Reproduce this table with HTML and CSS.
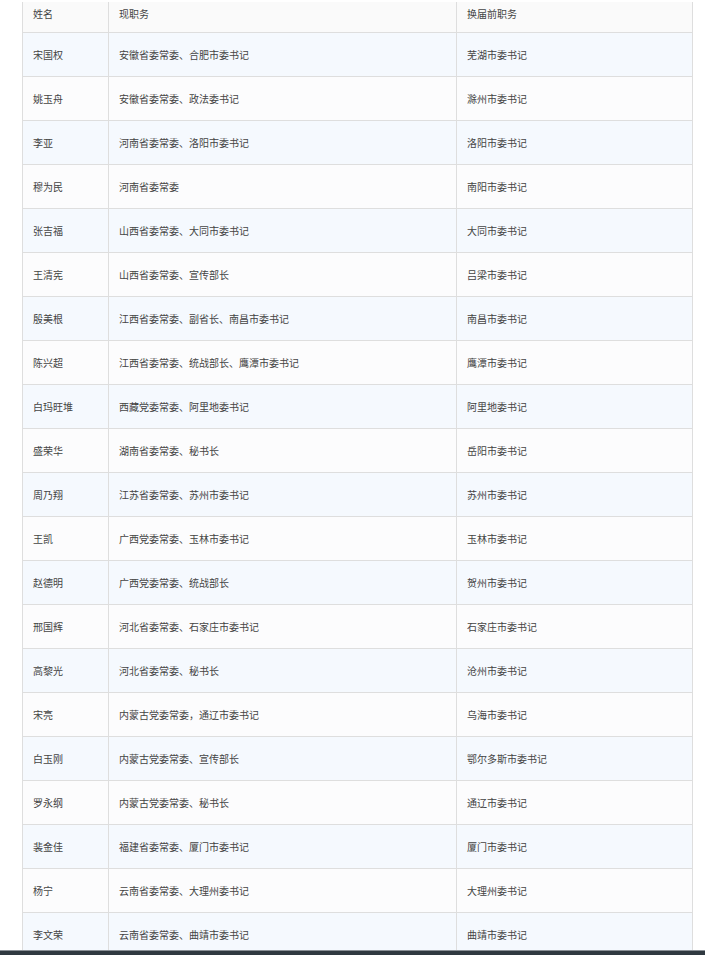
FILE: index.html
```html
<!DOCTYPE html>
<html lang="zh">
<head>
<meta charset="utf-8">
<link rel="stylesheet" href="styles.css">
</head>
<body>
<div class="viewport">
  <div class="scroll">
    <table class="roster">
      <colgroup><col class="c-name"><col class="c-now"><col class="c-prev"></colgroup>
      <thead>
        <tr><th>姓名</th><th>现职务</th><th>换届前职务</th></tr>
      </thead>
      <tbody>
        <tr><td>宋国权</td><td>安徽省委常委、合肥市委书记</td><td>芜湖市委书记</td></tr>
        <tr><td>姚玉舟</td><td>安徽省委常委、政法委书记</td><td>滁州市委书记</td></tr>
        <tr><td>李亚</td><td>河南省委常委、洛阳市委书记</td><td>洛阳市委书记</td></tr>
        <tr><td>穆为民</td><td>河南省委常委</td><td>南阳市委书记</td></tr>
        <tr><td>张吉福</td><td>山西省委常委、大同市委书记</td><td>大同市委书记</td></tr>
        <tr><td>王清宪</td><td>山西省委常委、宣传部长</td><td>吕梁市委书记</td></tr>
        <tr><td>殷美根</td><td>江西省委常委、副省长、南昌市委书记</td><td>南昌市委书记</td></tr>
        <tr><td>陈兴超</td><td>江西省委常委、统战部长、鹰潭市委书记</td><td>鹰潭市委书记</td></tr>
        <tr><td>白玛旺堆</td><td>西藏党委常委、阿里地委书记</td><td>阿里地委书记</td></tr>
        <tr><td>盛荣华</td><td>湖南省委常委、秘书长</td><td>岳阳市委书记</td></tr>
        <tr><td>周乃翔</td><td>江苏省委常委、苏州市委书记</td><td>苏州市委书记</td></tr>
        <tr><td>王凯</td><td>广西党委常委、玉林市委书记</td><td>玉林市委书记</td></tr>
        <tr><td>赵德明</td><td>广西党委常委、统战部长</td><td>贺州市委书记</td></tr>
        <tr><td>邢国辉</td><td>河北省委常委、石家庄市委书记</td><td>石家庄市委书记</td></tr>
        <tr><td>高黎光</td><td>河北省委常委、秘书长</td><td>沧州市委书记</td></tr>
        <tr><td>宋亮</td><td>内蒙古党委常委，通辽市委书记</td><td>乌海市委书记</td></tr>
        <tr><td>白玉刚</td><td>内蒙古党委常委、宣传部长</td><td>鄂尔多斯市委书记</td></tr>
        <tr><td>罗永纲</td><td>内蒙古党委常委、秘书长</td><td>通辽市委书记</td></tr>
        <tr><td>裴金佳</td><td>福建省委常委、厦门市委书记</td><td>厦门市委书记</td></tr>
        <tr><td>杨宁</td><td>云南省委常委、大理州委书记</td><td>大理州委书记</td></tr>
        <tr><td>李文荣</td><td>云南省委常委、曲靖市委书记</td><td>曲靖市委书记</td></tr>
      </tbody>
    </table>
  </div>
  <div class="edge"></div>
</div>
</body>
</html>
```
FILE: styles.css
```css
html, body {
  margin: 0;
  padding: 0;
  background: #ffffff;
}
.viewport {
  height: 955px;
  display: flex;
  flex-direction: column;
  overflow: hidden;
}
.scroll {
  height: 950px;
  flex: none;
  overflow: hidden;
  padding: 2px 0 0 22px;
  box-sizing: border-box;
}
.edge {
  height: 5px;
  flex: none;
  background: #2f3940;
  border-top: 1px solid #8a9096;
  box-sizing: border-box;
}
.roster {
  border-collapse: collapse;
  table-layout: fixed;
  width: 670px;
  font-family: "Noto Sans CJK SC", "Noto Sans", sans-serif;
  font-size: 10px;
  color: #444444;
}
.c-name { width: 86px; }
.c-now { width: 348px; }
.c-prev { width: 236px; }
.roster th, .roster td {
  border: 1px solid #dedede;
  padding: 0 10px;
  text-align: left;
  font-weight: normal;
  white-space: nowrap;
}
.roster thead th {
  border-top: none;
  height: 30px;
  box-sizing: border-box;
  vertical-align: top;
  padding-top: 4px;
  background: #fafafa;
}
.roster tbody td {
  height: 44px;
  box-sizing: border-box;
  vertical-align: middle;
  padding-top: 1px;
}
.roster tbody tr:nth-child(odd) td {
  background: #f5f9fe;
}
.roster tbody tr:nth-child(even) td {
  background: #fcfcfd;
}
```
